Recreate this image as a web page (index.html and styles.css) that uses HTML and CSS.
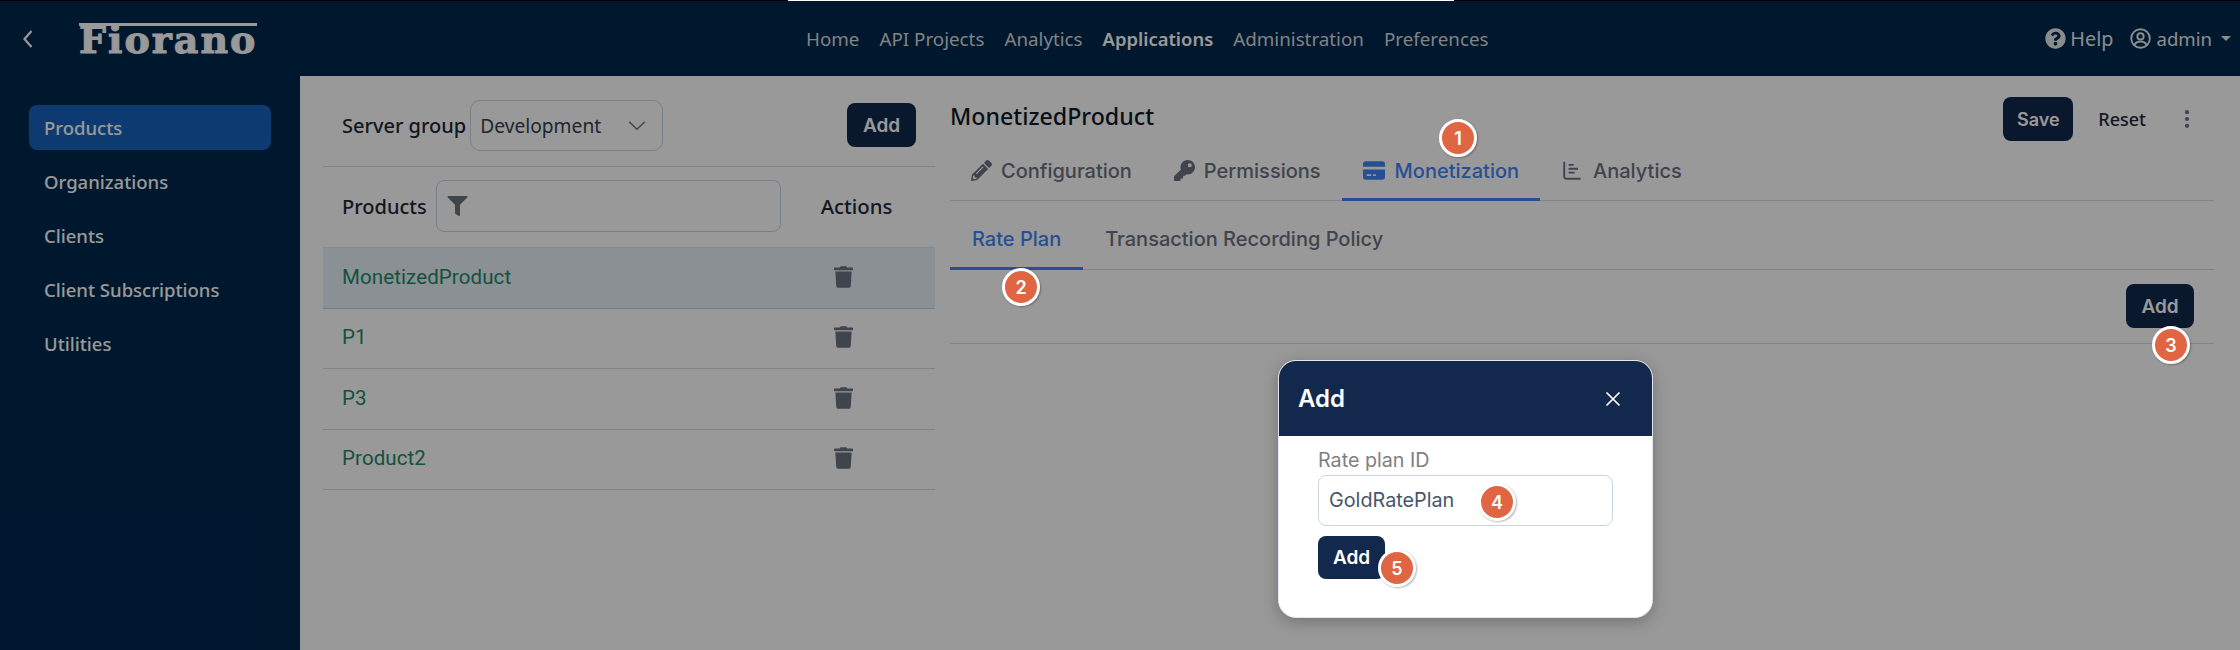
FILE: index.html
```html
<!DOCTYPE html>
<html lang="en">
<head>
<meta charset="utf-8">
<title>Fiorano - Products</title>
<link rel="stylesheet" href="styles.css">
</head>
<body>
<div class="topline"><span class="topline-strip"></span></div>
<header class="header">
  <svg class="back" viewBox="0 0 12 20"><path d="M9.5 2 2.5 10l7 8" fill="none" stroke="currentColor" stroke-width="2.2"/></svg>
  <div class="logo">Fiorano</div>
  <nav class="nav">
    <a>Home</a><a>API Projects</a><a>Analytics</a><a class="current">Applications</a><a>Administration</a><a>Preferences</a>
  </nav>
  <div class="account">
    <svg class="i-help" viewBox="0 0 512 512"><path fill="currentColor" d="M504 256c0 136.997-111.043 248-248 248S8 392.997 8 256C8 119.083 119.043 8 256 8s248 111.083 248 248zM262.655 90c-54.497 0-89.255 22.957-116.549 63.758-3.536 5.286-2.353 12.415 2.715 16.258l34.699 26.31c5.205 3.947 12.621 3.008 16.665-2.122 17.864-22.658 30.113-35.797 57.303-35.797 20.429 0 45.698 13.148 45.698 32.958 0 14.976-12.363 22.667-32.534 33.976C247.128 238.528 216 254.941 216 296v4c0 6.627 5.373 12 12 12h56c6.627 0 12-5.373 12-12v-1.333c0-28.462 83.186-29.647 83.186-106.667 0-58.002-60.165-102-116.531-102zM256 338c-25.365 0-46 20.635-46 46 0 25.364 20.635 46 46 46s46-20.636 46-46c0-25.365-20.635-46-46-46z"/></svg>
    <span class="help">Help</span>
    <svg class="i-user" viewBox="0 0 24 24" fill="none" stroke="currentColor" stroke-width="2.2"><circle cx="12" cy="12" r="10.6"/><circle cx="12" cy="9.6" r="3.6"/><path d="M5 19.5c1.4-3 4-4 7-4s5.600 1 7 4"/></svg>
    <span class="user">admin</span>
    <span class="caret"></span>
  </div>
</header>
<div class="layout">
  <aside class="sidebar">
    <a class="side-item active">Products</a>
    <a class="side-item">Organizations</a>
    <a class="side-item">Clients</a>
    <a class="side-item">Client Subscriptions</a>
    <a class="side-item">Utilities</a>
  </aside>
  <main class="main">
    <section class="list-panel">
      <div class="group-row">
        <span class="strong-label">Server group</span>
        <div class="select">Development
          <svg viewBox="0 0 22 12"><path d="M1.500 1.500 11 10.500l9.500-9" fill="none" stroke="currentColor" stroke-width="1.800"/></svg>
        </div>
        <button class="btn btn-add-top">Add</button>
      </div>
      <div class="list-head">
        <span class="strong-label">Products</span>
        <div class="filter">
          <svg viewBox="0 0 512 512"><path fill="currentColor" d="M487.976 0H24.028C2.71 0-8.047 25.866 7.058 40.971L192 225.941V432c0 7.831 3.821 15.170 10.237 19.662l80 55.980C298.020 518.690 320 507.493 320 487.980V225.941l184.947-184.970C520.021 25.896 509.338 0 487.976 0z"/></svg>
        </div>
        <span class="strong-label actions-label">Actions</span>
      </div>
      <ul class="rows">
        <li class="row selected"><span>MonetizedProduct</span><svg class="trash" viewBox="0 0 448 512"><path fill="currentColor" d="M432 32H312l-9.400-18.700A24 24 0 0 0 281.100 0H166.800a23.720 23.720 0 0 0-21.400 13.300L136 32H16A16 16 0 0 0 0 48v32a16 16 0 0 0 16 16h416a16 16 0 0 0 16-16V48a16 16 0 0 0-16-16zM53.200 467a48 48 0 0 0 47.900 45h245.800a48 48 0 0 0 47.900-45L416 128H32z"/></svg></li>
        <li class="row"><span>P1</span><svg class="trash" viewBox="0 0 448 512"><path fill="currentColor" d="M432 32H312l-9.400-18.700A24 24 0 0 0 281.100 0H166.800a23.720 23.720 0 0 0-21.400 13.300L136 32H16A16 16 0 0 0 0 48v32a16 16 0 0 0 16 16h416a16 16 0 0 0 16-16V48a16 16 0 0 0-16-16zM53.200 467a48 48 0 0 0 47.900 45h245.800a48 48 0 0 0 47.900-45L416 128H32z"/></svg></li>
        <li class="row"><span>P3</span><svg class="trash" viewBox="0 0 448 512"><path fill="currentColor" d="M432 32H312l-9.400-18.700A24 24 0 0 0 281.100 0H166.800a23.720 23.720 0 0 0-21.400 13.300L136 32H16A16 16 0 0 0 0 48v32a16 16 0 0 0 16 16h416a16 16 0 0 0 16-16V48a16 16 0 0 0-16-16zM53.200 467a48 48 0 0 0 47.900 45h245.800a48 48 0 0 0 47.900-45L416 128H32z"/></svg></li>
        <li class="row"><span>Product2</span><svg class="trash" viewBox="0 0 448 512"><path fill="currentColor" d="M432 32H312l-9.400-18.700A24 24 0 0 0 281.100 0H166.800a23.720 23.720 0 0 0-21.400 13.300L136 32H16A16 16 0 0 0 0 48v32a16 16 0 0 0 16 16h416a16 16 0 0 0 16-16V48a16 16 0 0 0-16-16zM53.200 467a48 48 0 0 0 47.900 45h245.800a48 48 0 0 0 47.900-45L416 128H32z"/></svg></li>
      </ul>
    </section>
    <section class="detail-panel">
      <div class="detail-head">
        <h1 class="title">MonetizedProduct</h1>
        <button class="btn btn-save">Save</button>
        <button class="link-btn">Reset</button>
        <svg class="kebab" viewBox="0 0 6 22"><circle cx="3" cy="3.500" r="2.300" fill="currentColor"/><circle cx="3" cy="11" r="2.300" fill="currentColor"/><circle cx="3" cy="18.500" r="2.300" fill="currentColor"/></svg>
      </div>
      <div class="tabs">
        <a class="tab"><svg viewBox="0 0 512 512"><path fill="currentColor" d="M497.900 142.100l-46.100 46.100c-4.700 4.700-12.300 4.700-17 0l-111-111c-4.700-4.700-4.700-12.300 0-17l46.100-46.100c18.700-18.700 49.100-18.700 67.900 0l60.100 60.100c18.800 18.700 18.800 49.100 0 67.900zM284.200 99.800L21.600 362.400.4 483.900c-2.900 16.400 11.400 30.600 27.800 27.800l121.500-21.300 262.600-262.600c4.700-4.700 4.700-12.300 0-17l-111-111c-4.800-4.700-12.400-4.700-17.100 0zM124.100 339.900c-5.500-5.500-5.500-14.300 0-19.800l154-154c5.500-5.500 14.300-5.500 19.800 0s5.500 14.300 0 19.800l-154 154c-5.500 5.500-14.300 5.500-19.800 0zM88 424h48v36.300l-64.500 11.300-31.100-31.100L51.700 376H88v48z"/></svg>Configuration</a>
        <a class="tab"><svg viewBox="0 0 512 512"><path fill="currentColor" d="M512 176.001C512 273.203 433.202 352 336 352c-11.220 0-22.190-1.062-32.827-3.069l-24.012 27.014A23.999 23.999 0 0 1 261.223 384H224v40c0 13.255-10.745 24-24 24h-40v40c0 13.255-10.745 24-24 24H24c-13.255 0-24-10.745-24-24v-78.059c0-6.365 2.529-12.470 7.029-16.971l161.802-161.802C163.108 213.814 160 195.271 160 176 160 78.798 238.797.001 335.999 0 433.488-.001 512 78.511 512 176.001zM336 128c0 26.510 21.490 48 48 48s48-21.490 48-48-21.490-48-48-48-48 21.490-48 48z"/></svg>Permissions</a>
        <a class="tab active"><svg class="wide" viewBox="0 0 24 20"><path fill="currentColor" d="M3 0h18a3 3 0 0 1 3 3v3H0V3a3 3 0 0 1 3-3zM0 9h24v8a3 3 0 0 1-3 3H3a3 3 0 0 1-3-3zm4 5v2h5v-2zm7 0v2h3v-2z"/></svg>Monetization</a>
        <a class="tab"><svg class="wide" viewBox="0 0 22 22"><path fill="none" stroke="currentColor" stroke-width="2.200" d="M2 1v17a2.500 2.500 0 0 0 2.500 2.500H21M7 4.500h6M7 9h11M7 13.500h7"/></svg>Analytics</a>
      </div>
      <div class="subtabs">
        <a class="subtab active">Rate Plan</a>
        <a class="subtab">Transaction Recording Policy</a>
      </div>
      <div class="rate-toolbar"><button class="btn btn-add-rate">Add</button></div>
    </section>
  </main>
</div>
<div class="overlay"></div>
<div class="modal">
  <div class="modal-head">
    <span class="modal-title">Add</span>
    <svg class="close" viewBox="0 0 16 16"><path d="M1.500 1.500l13 13M14.500 1.500l-13 13" stroke="currentColor" stroke-width="1.700" fill="none"/></svg>
  </div>
  <div class="modal-body">
    <label class="field-label">Rate plan ID</label>
    <div class="input">GoldRatePlan</div>
    <button class="btn btn-modal">Add</button>
  </div>
</div>
<span class="badge b1">1</span>
<span class="badge b2">2</span>
<span class="badge b3">3</span>
<span class="badge b4">4</span>
<span class="badge b5">5</span>
</body>
</html>
```

FILE: styles.css
```css
* { box-sizing: border-box; }
html, body { margin: 0; padding: 0; }
body {
  position: relative;
  width: 2240px;
  height: 650px;
  overflow: hidden;
  background: #fff;
  font-family: "Noto Sans", sans-serif;
  color: #374151;
}
a { display: block; }
.topline { height: 1px; background: #000; padding-left: 788px; position: relative; z-index: 5; }
.topline-strip { display: block; width: 666px; height: 1px; background: #fff; }

.header {
  height: 75px;
  background: #00284e;
  color: #fff;
  display: flex;
  align-items: center;
}
.back { width: 12px; height: 20px; margin-left: 22px; color: #fff; flex: none; }
.logo {
  width: 178px;
  height: 31px;
  margin-left: 45px;
  flex: none;
  font-family: "DejaVu Serif", serif;
  font-weight: 700;
  font-size: 38px;
  line-height: 28px;
  letter-spacing: 2px;
  white-space: nowrap;
  color: #fff;
  border-top: 3px solid #fff;
  -webkit-text-stroke: 1px #fff;
}
.nav { display: flex; gap: 20px; margin-left: 549px; font-size: 18.8px; color: #d9d9de; }
.nav .current { color: #fff; font-weight: 600; font-size: 18.4px; }
.account { display: flex; align-items: center; margin-left: auto; padding-right: 9px; font-size: 19.8px; color: #fff; opacity: .9; }
.i-help { width: 21px; height: 21px; }
.help { margin-left: 4px; }
.i-user { width: 21px; height: 21px; margin-left: 17px; }
.user { margin-left: 5px; font-size: 18.6px; }
.caret { margin-left: 9px; border-top: 5px solid currentColor; border-left: 5px solid transparent; border-right: 5px solid transparent; }

.layout { display: flex; height: 574px; }
.sidebar {
  width: 300px;
  background: #00284e;
  padding: 29px 29px 0;
  display: flex;
  flex-direction: column;
  gap: 9px;
}
.side-item {
  height: 45px;
  line-height: 46px;
  padding-left: 15px;
  border-radius: 8px;
  color: #fff;
  font-size: 18.5px;
  font-weight: 500;
}
.side-item.active { background: #1661bb; }

.main { flex: 1; display: flex; }
.list-panel { width: 612px; margin-left: 23px; }
.strong-label { font-size: 20px; font-weight: 500; color: #1f2937; white-space: nowrap; }
.group-row { display: flex; align-items: center; height: 91px; padding: 8px 0 0 19px; border-bottom: 1px solid #d5dbe3; }
.select {
  width: 193px;
  height: 51px;
  margin-left: 4px;
  border: 1px solid #cbd5e1;
  border-radius: 10px;
  display: flex;
  align-items: center;
  justify-content: space-between;
  padding: 0 16px 0 9px;
  font-size: 19.2px;
  color: #374151;
}
.select svg { width: 18px; height: 11px; color: #64748b; }
.btn {
  border: 0;
  background: #12284c;
  color: #fff;
  border-radius: 8px;
  font-family: "Inter", sans-serif;
  font-weight: 600;
  font-size: 19px;
  padding: 0;
}
.btn-add-top { width: 69px; height: 44px; margin-left: auto; margin-right: 19px; }
.list-head { display: flex; align-items: center; height: 80px; padding: 0 0 2px 19px; }
.filter { width: 345px; height: 52px; margin-left: 9px; border: 1px solid #cbd5e1; border-radius: 8px; display: flex; align-items: center; padding-left: 10px; }
.filter svg { width: 21px; height: 20px; color: #6b7280; }
.actions-label { margin-left: 40px; font-size: 20.4px; }
.rows { list-style: none; margin: 0; padding: 0; border-top: 1px solid #e5e7eb; }
.row {
  height: 60.5px;
  display: flex;
  align-items: center;
  justify-content: space-between;
  padding: 0 82px 2px 19px;
  border-bottom: 1px solid #d5dbe3;
  font-family: "Roboto", sans-serif;
  font-size: 20.5px;
  letter-spacing: .1px;
  color: #1d8a64;
}
.row.selected { background: #e6f0f7; border-bottom-color: #bfd0ea; }
.trash { width: 19px; height: 22px; color: #6b7280; }

.detail-panel { width: 1264px; margin-left: 15px; }
.detail-head { display: flex; align-items: center; height: 86px; padding-right: 18px; }
.title { margin: 0 auto 6px 0; font-size: 23.2px; font-weight: 500; color: #111827; }
.btn-save { width: 70px; height: 44px; font-size: 18px; }
.link-btn { margin-left: 25px; border: 0; background: none; font-family: "Noto Sans", sans-serif; font-size: 18px; font-weight: 500; color: #1f2937; padding: 0; }
.kebab { width: 6px; height: 20px; margin-left: 38px; margin-right: 6px; color: #6b7280; }
.tabs { display: flex; height: 39px; border-bottom: 1px solid #d5dbe3; }
.tab {
  display: flex; align-items: center; height: 39px;
  padding: 0 21px 22px;
  font-family: "Inter", sans-serif;
  font-size: 20px; font-weight: 500; color: #6b7280;
}
.tab svg { width: 21px; height: 21px; margin-right: 9px; }
.tab svg.wide { width: 22px; height: 19px; margin-right: 10px; }
.tab.active { color: #4484f5; border-bottom: 3px solid #4484f5; padding-bottom: 19px; }
.subtabs { display: flex; height: 69px; border-bottom: 1px solid #d5dbe3; }
.subtab {
  height: 69px; line-height: 76px; padding: 0 22px;
  font-family: "Inter", sans-serif;
  font-size: 20px; font-weight: 500; color: #6b7280;
}
.subtab.active { color: #4484f5; border-bottom: 3px solid #4484f5; }
.rate-toolbar { display: flex; justify-content: flex-end; align-items: center; height: 74px; padding: 0 20px 1px 0; border-bottom: 1px solid #d5dbe3; }
.btn-add-rate { width: 68px; height: 44px; }

.overlay { position: absolute; inset: 0; background: rgba(0,0,0,.4); z-index: 2; }
.modal {
  position: absolute; left: 1278px; top: 360px; width: 375px; height: 258px;
  background: #fff; border-radius: 18px; overflow: hidden; z-index: 3;
  border: 1px solid #e2e6ec;
  box-shadow: 0 4px 16px rgba(0,0,0,.25);
}
.modal-head { height: 75px; margin: 0; background: #12284c; color: #fff; display: flex; align-items: center; justify-content: space-between; padding: 0 31px 0 19px; }
.modal-title { font-family: "Inter", sans-serif; font-size: 24px; font-weight: 600; }
.close { width: 16px; height: 16px; }
.modal-body { padding: 13px 39px 0; }
.field-label { display: block; font-family: "Inter", sans-serif; font-size: 19.7px; line-height: 23px; color: #808080; }
.input { height: 51px; margin-top: 3px; border: 1px solid #cbd5e1; border-radius: 8px; padding-left: 10px; line-height: 49px; font-family: "Inter", sans-serif; font-size: 19.8px; color: #475569; }
.btn-modal { display: block; width: 67px; height: 43px; margin-top: 10px; font-size: 19px; }

.badge {
  position: absolute; width: 38px; height: 38px; z-index: 4;
  border: 3px solid #fff; border-radius: 50%;
  background: #df6543; color: #fff;
  font-family: "Inter", sans-serif; font-size: 18px; font-weight: 600;
  display: flex; align-items: center; justify-content: center;
  box-shadow: 1px 1px 2px rgba(0,0,0,.3);
}
.b1 { left: 1439px; top: 119px; }
.b2 { left: 1002px; top: 268px; }
.b3 { left: 2152px; top: 326px; }
.b4 { left: 1478px; top: 483px; }
.b5 { left: 1378px; top: 549px; }
```
